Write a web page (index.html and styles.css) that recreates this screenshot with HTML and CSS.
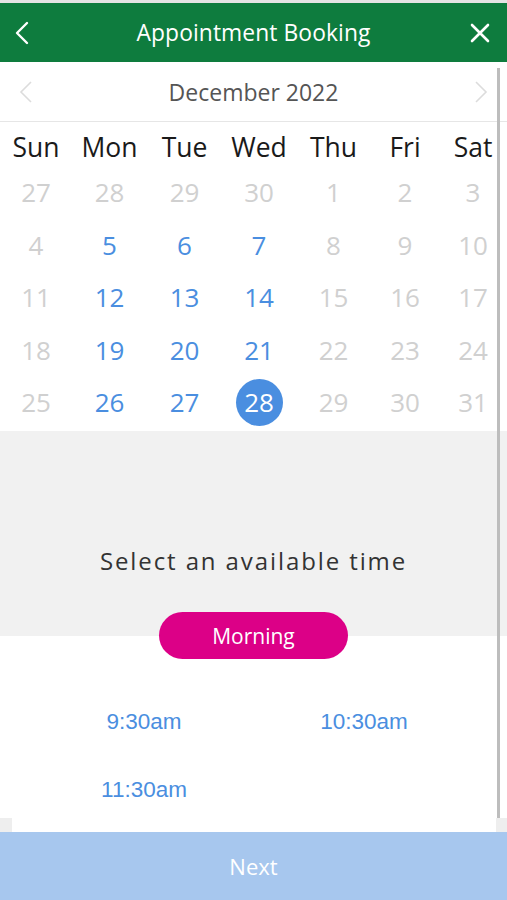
FILE: index.html
```html
<!DOCTYPE html>
<html>
<head>
<meta charset="utf-8">
<link rel="stylesheet" href="styles.css">
</head>
<body>
<div class="app">
  <div class="topstrip"></div>
  <header class="header">
    <svg class="hicon back" width="14" height="24" viewBox="0 0 14 24"><path d="M12 2 L2 12 L12 22" fill="none" stroke="#fff" stroke-width="2.4" stroke-linecap="round" stroke-linejoin="round"/></svg>
    <h1 class="title">Appointment Booking</h1>
    <svg class="hicon close" width="20" height="20" viewBox="0 0 20 20"><path d="M2 2 L18 18 M18 2 L2 18" fill="none" stroke="#fff" stroke-width="2.6" stroke-linecap="round"/></svg>
  </header>
  <main class="main">
    <div class="month">
      <svg class="mchev" width="14" height="24" viewBox="0 0 14 24"><path d="M12 2 L2 12 L12 22" fill="none" stroke="#dcdcdc" stroke-width="1.6"/></svg>
      <span class="month-label">December 2022</span>
      <svg class="mchev" width="14" height="24" viewBox="0 0 14 24"><path d="M2 2 L12 12 L2 22" fill="none" stroke="#dcdcdc" stroke-width="1.6"/></svg>
    </div>
    <div class="cal">
      <div class="dn">Sun</div><div class="dn">Mon</div><div class="dn">Tue</div><div class="dn">Wed</div><div class="dn">Thu</div><div class="dn">Fri</div><div class="dn">Sat</div>
      <div class="d off">27</div><div class="d off">28</div><div class="d off">29</div><div class="d off">30</div><div class="d off">1</div><div class="d off">2</div><div class="d off">3</div>
      <div class="d off">4</div><div class="d on">5</div><div class="d on">6</div><div class="d on">7</div><div class="d off">8</div><div class="d off">9</div><div class="d off">10</div>
      <div class="d off">11</div><div class="d on">12</div><div class="d on">13</div><div class="d on">14</div><div class="d off">15</div><div class="d off">16</div><div class="d off">17</div>
      <div class="d off">18</div><div class="d on">19</div><div class="d on">20</div><div class="d on">21</div><div class="d off">22</div><div class="d off">23</div><div class="d off">24</div>
      <div class="d off">25</div><div class="d on">26</div><div class="d on">27</div><div class="d sel"><span>28</span></div><div class="d off">29</div><div class="d off">30</div><div class="d off">31</div>
    </div>
    <section class="timesec">
      <p class="prompt">Select an available time</p>
      <div class="pill">Morning</div>
    </section>
    <div class="times">
      <div class="t">9:30am</div>
      <div class="t">10:30am</div>
      <div class="t">11:30am</div>
    </div>
    <div class="gap"><div class="gap-inner"></div></div>
    <div class="scrollbar"></div>
  </main>
  <button class="next">Next</button>
</div>
</body>
</html>
```
FILE: styles.css
```css
* { box-sizing: border-box; }
html, body { margin: 0; padding: 0; }
body {
  width: 507px;
  height: 900px;
  overflow: hidden;
  background: #fff;
  font-family: "Open Sans", "Noto Sans", sans-serif;
}
.app { display: flex; flex-direction: column; height: 900px; }
.app > *, .main > * { flex-shrink: 0; }
.topstrip { height: 3px; background: #e4e4e4; }
.header {
  height: 59px;
  background: #0e7c3e;
  display: flex;
  align-items: center;
  justify-content: space-between;
  padding: 0 17px 0 15px;
}
.title {
  margin: 0 0 0 8px;
  font-weight: 400;
  font-size: 22.8px;
  color: #fff;
  letter-spacing: 0.1px;
}
.hicon { display: block; }
.main { position: relative; flex: 1 1 auto; min-height: 0; display: flex; flex-direction: column; }
.month {
  height: 60px;
  border-bottom: 1px solid #e6e6e6;
  display: flex;
  align-items: center;
  justify-content: space-between;
  padding: 0 19px 0 19px;
}
.month-label { font-size: 23px; color: #555; }
.cal {
  display: grid;
  grid-template-columns: 72px 75px 75px 74px 75px 68px 68px;
  grid-template-rows: 44px repeat(5, 52.5px);
  padding-bottom: 2.5px;
}
.dn, .d { display: flex; align-items: center; justify-content: center; }
.dn { font-size: 26.5px; color: #1a1a1a; padding-top: 6px; }
.d { font-size: 26px; }
.off { color: #d0d0d0; }
.on { color: #4a8ee0; }
.sel span {
  width: 47px; height: 47px;
  border-radius: 50%;
  background: #4a8ee0;
  color: #fff;
  display: flex; align-items: center; justify-content: center;
}
.timesec {
  height: 228px;
  background: linear-gradient(to bottom, #f1f1f1 0, #f1f1f1 205px, #fff 205px);
  display: flex;
  flex-direction: column;
  align-items: center;
  justify-content: flex-end;
}
.prompt {
  margin: 0 0 35px;
  font-size: 24px;
  letter-spacing: 1.9px;
  color: #333;
}
.pill {
  width: 189px;
  height: 47px;
  border-radius: 24px;
  background: #dc0087;
  color: #fff;
  font-size: 21px;
  display: flex; align-items: center; justify-content: center;
}
.times {
  display: grid;
  grid-template-columns: 288px 152px;
  grid-template-rows: 56px 56px;
  row-gap: 12px;
  padding-top: 35px;
  font-family: "Liberation Sans", Arial, sans-serif;
  font-size: 22.5px;
  color: #4a8ee0;
}
.t { display: flex; align-items: center; justify-content: center; }
.gap { height: 14px; background: #eeeeee; margin-top: auto; display: flex; }
.gap-inner { flex: 1; margin: 0 11px 0 12px; background: #fff; }
.scrollbar {
  position: absolute;
  left: 497px;
  top: 6px;
  width: 3px;
  height: 750px;
  background: #bdbdbd;
}
.next {
  height: 68px;
  border: 0;
  background: #a7c7ee;
  color: #fff;
  font-family: "Open Sans", "Noto Sans", sans-serif;
  font-size: 22px;
  padding: 0;
}
```
